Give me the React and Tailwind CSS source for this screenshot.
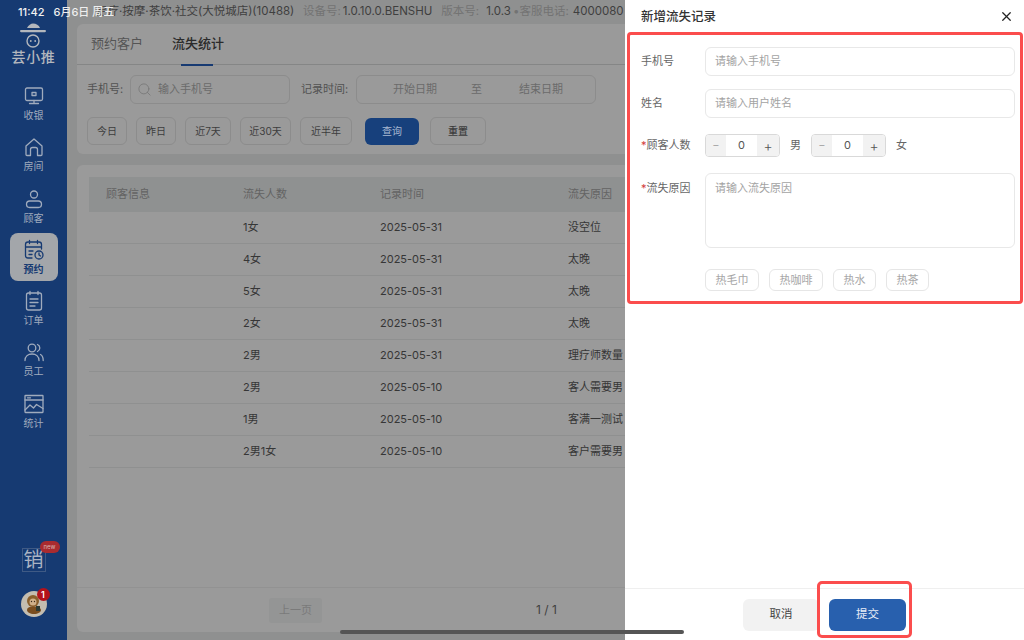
import React from "react";
import { Search, X } from "lucide-react";

const font = { fontFamily: '"Inter","Noto Sans CJK SC",sans-serif' };

const Ic = ({ children }) => (
  <svg width="24" height="24" viewBox="0 0 24 24" fill="none" stroke="currentColor" strokeWidth="1.3" strokeLinecap="round" strokeLinejoin="round">{children}</svg>
);

const nav = [
  ["收银", <Ic><rect x="3.5" y="4" width="17" height="12.5" rx="1.5" /><path d="M12 16.5v3M7.5 19.5h9M10 8.5h4v3h-4z" /></Ic>],
  ["房间", <Ic><path d="M4 11l8-7 8 7v8.5a1 1 0 0 1-1 1h-3.5v-6a2 2 0 0 0-2-2h-3a2 2 0 0 0-2 2v6H5a1 1 0 0 1-1-1z" /></Ic>],
  ["顾客", <Ic><circle cx="12" cy="7.5" r="3.5" /><rect x="4.5" y="14" width="15" height="6.5" rx="3.2" /></Ic>],
  ["预约", <Ic><path d="M10 20H6a2.5 2.5 0 0 1-2.500-2.500V6.500A2.500 2.500 0 0 1 6 4h11a2.500 2.500 0 0 1 2.500 2.500V11M3.500 9h16M7.500 2.500v3M15.500 2.500v3M7 13h4M7 16.500h3" /><circle cx="17" cy="17" r="4" /><path d="M17 15v2l1.500 1" /></Ic>],
  ["订单", <Ic><rect x="4.500" y="4" width="15" height="17" rx="2" /><path d="M8 2.500v3M16 2.500v3M8 10h8M8 13.500h8M8 17h5" /></Ic>],
  ["员工", <Ic><circle cx="10" cy="8" r="3.800" /><path d="M3 20.500c0-4 3-6.500 7-6.500s7 2.500 7 6.500M15.500 4.500a3.800 3.800 0 0 1 0 7M18.500 14.500c1.700 1 2.700 3 2.700 6" /></Ic>],
  ["统计", <Ic><rect x="3" y="3.500" width="18" height="17" rx="0.500" /><path d="M3 8h18M5.500 5.800h3M3 18l5-5 3.500 3 3-3.500 6.500 4" /></Ic>],
];

const rows = [
  ["1女", "2025-05-31", "没空位"],
  ["4女", "2025-05-31", "太晚"],
  ["5女", "2025-05-31", "太晚"],
  ["2女", "2025-05-31", "太晚"],
  ["2男", "2025-05-31", "理疗师数量"],
  ["2男", "2025-05-10", "客人需要男"],
  ["1男", "2025-05-10", "客满一测试"],
  ["2男1女", "2025-05-10", "客户需要男"],
];

function Stepper() {
  return (
    <div className="flex h-[23px] w-[75px] items-center overflow-hidden rounded-[4px] border border-[#d9d9d9] text-[11px]">
      <span className="flex h-full w-[20px] items-center justify-center bg-[#f2f2f2] text-[#aaaaaa]">−</span>
      <span className="flex-1 text-center text-[#555555]">0</span>
      <span className="flex h-full w-[22px] items-center justify-center bg-[#f2f2f2] text-[14px] font-light text-[#555555]">+</span>
    </div>
  );
}

export default function App() {
  return (
    <div style={font} className="relative flex h-[640px] w-[1024px] overflow-hidden bg-[#8f9090]">
      {/* sidebar */}
      <aside className="flex h-full w-[67px] shrink-0 flex-col items-center bg-[#163a72] text-[#a0abbd]">
        <div className="mt-[23px] flex flex-col items-center">
          <svg width="30" height="25" viewBox="0 0 30 25" className="text-[#b3b7bd]">
            <path d="M9 5c1.500-3 4-4.500 6-4.500 3 0 6 1.500 7 4.500z" fill="currentColor" />
            <rect x="2" y="7" width="26" height="2.200" rx="1.100" fill="currentColor" />
            <circle cx="15" cy="18" r="6" fill="none" stroke="currentColor" strokeWidth="1.400" />
            <circle cx="12.800" cy="18" r="0.900" fill="currentColor" />
            <circle cx="17.200" cy="18" r="0.900" fill="currentColor" />
          </svg>
          <span className="mt-[2px] whitespace-nowrap text-[14px] leading-[14px] font-medium tracking-[0.7px] text-[#b3b7bd]">芸小推</span>
        </div>
        <nav className="mt-[15px] flex flex-col items-center">
          {nav.map(([label, icon]) => {
            const active = label === "预约";
            return (
              <div key={label} className={active ? "mb-[3.3px] flex h-[48px] w-[48px] flex-col items-center justify-center rounded-[8px] bg-[#a3a6aa] text-[#163a72]" : "mb-[3.3px] flex h-[48px] w-[48px] flex-col items-center justify-center"}>
                {icon}
                <span className={active ? "mt-[1px] text-[10px] leading-[13px] font-semibold" : "mt-[1px] text-[10px] leading-[13px]"}>{label}</span>
              </div>
            );
          })}
        </nav>
        <div className="relative mt-auto mb-[19px] flex h-[24px] w-[24px] items-center justify-center border border-[#3f5a85] text-[20px] leading-none text-[#aab3c3]">
          销
          <span className="absolute -top-[8px] -right-[15px] flex h-[12px] w-[20px] items-center justify-center rounded-full bg-[#a92b2f] text-[6px] text-[#d9b5b5]">new</span>
        </div>
        <div className="relative mb-[23px] flex h-[26px] w-[26px] items-center justify-center rounded-full bg-[#c4bdb0]">
          <svg width="22" height="22" viewBox="0 0 22 22">
            <circle cx="10" cy="8" r="6" fill="#8a5f2c" />
            <circle cx="10" cy="9" r="3.500" fill="#d0b08a" />
            <circle cx="8.500" cy="8.500" r="0.700" fill="#3a2a18" />
            <circle cx="11.500" cy="8.500" r="0.700" fill="#3a2a18" />
            <path d="M4 17c0-2 2-3.500 6-3.500s8 1 8 3.500c0 2-3 4-7 4s-7-2-7-4z" fill="#7a4d1e" />
            <rect x="13" y="13" width="4" height="5" fill="#2e3a33" />
          </svg>
          <span className="absolute -top-[3px] -right-[3px] flex h-[13px] w-[13px] items-center justify-center rounded-full bg-[#b3121b] text-[9px] leading-none font-semibold text-white">1</span>
        </div>
      </aside>

      {/* main */}
      <main className="flex h-full min-w-0 flex-1 flex-col pl-[10px]">
        <div className="flex h-[24px] shrink-0 items-center whitespace-nowrap pl-[19px] text-[11.5px] text-[#3f3f3f]">
          <span className="w-[207px]">足疗·按摩·茶饮·社交(大悦城店)(10488)</span>
          <span className="text-[#737373]">设备号:</span>
          <span className="ml-[2px]">1.0.10.0.BENSHU</span>
          <span className="ml-[9px] text-[#737373]">版本号:</span>
          <span className="ml-[7px]">1.0.3</span>
          <span className="ml-[2px] text-[#737373]">•客服电话:</span>
          <span className="ml-[4px]">4000080</span>
        </div>
        <section className="h-[130px] w-[560px] shrink-0 rounded-l-[6px] bg-[#9a9a9a]">
          <div className="flex h-[41px] items-center gap-[29px] border-b border-[#858686] pl-[14px] text-[13px]">
            <span className="relative text-[#555555]">预约客户</span>
            <span className="relative font-medium text-[#2b2b2b]">
              流失统计
              <span className="absolute -bottom-[12px] left-[9px] h-[2px] w-[32px] bg-[#173a72]" />
            </span>
          </div>
          <div className="mt-[10px] flex items-center pl-[10px] text-[11px] text-[#525252]">
            <span className="w-[43px]">手机号:</span>
            <div className="flex h-[29px] w-[160px] items-center rounded-[6px] border border-[#8c8c8c] pl-[6px] text-[#6b6b6b]">
              <Search size={15} strokeWidth={1.25} className="text-[#747474]" />
              <span className="ml-[6px]">输入手机号</span>
            </div>
            <span className="ml-[11px] w-[55px]">记录时间:</span>
            <div className="flex h-[29px] w-[240px] items-center rounded-[6px] border border-[#8c8c8c] text-[#6b6b6b]">
              <span className="ml-[36px]">开始日期</span>
              <span className="ml-[34px]">至</span>
              <span className="ml-[37px]">结束日期</span>
            </div>
          </div>
          <div className="mt-[13px] flex items-center gap-[9px] pl-[10px] text-[10px] text-[#3d3d3d]">
            {[["今日", "w-[40px]"], ["昨日", "w-[40px]"], ["近7天", "w-[46px]"], ["近30天", "w-[51px]"], ["近半年", "w-[52px]"]].map(([t, w]) => (
              <span key={t} className={`flex h-[28px] ${w} items-center justify-center rounded-[6px] border border-[#8c8c8c]`}>{t}</span>
            ))}
            <span className="ml-[4px] flex h-[27px] w-[54px] items-center justify-center rounded-[6px] bg-[#17407c] text-[#a9b8d1]">查询</span>
            <span className="ml-[2px] flex h-[28px] w-[56px] items-center justify-center rounded-[6px] border border-[#8c8c8c] font-medium">重置</span>
          </div>
        </section>
        <section className="mt-[11px] mb-[8px] flex min-h-0 w-[560px] flex-1 flex-col rounded-l-[6px] bg-[#9a9a9a] pt-[12px] pl-[12px]">
          <div className="flex h-[35px] shrink-0 items-center bg-[#8f9191] text-[11px] text-[#636363]">
            <span className="w-[154px] pl-[17px]">顾客信息</span>
            <span className="w-[137px]">流失人数</span>
            <span className="w-[188px]">记录时间</span>
            <span>流失原因</span>
          </div>
          {rows.map(([a, b, c], i) => (
            <div key={i} className="flex h-[32px] shrink-0 items-center border-b border-[#8f9090] text-[11px] text-[#363636]">
              <span className="w-[154px]" />
              <span className="w-[137px]">{a}</span>
              <span className="w-[188px]">{b}</span>
              <span className="whitespace-nowrap">{c}</span>
            </div>
          ))}
          <div className="-ml-[12px] mt-auto flex h-[45px] shrink-0 items-center border-t border-[#929292] text-[11px]">
            <span className="ml-[192px] flex h-[25px] w-[53px] items-center justify-center rounded-[3px] bg-[#949595] text-[#7a7a7a]">上一页</span>
            <span className="ml-[214px] text-[12px] text-[#3f3f3f]">1 / 1</span>
          </div>
        </section>
      </main>

      {/* drawer */}
      <div className="absolute top-0 right-0 flex h-full w-[399px] flex-col bg-white">
        <div className="flex h-[32px] shrink-0 items-center justify-between pt-[2px] pr-[10px] pl-[16px]">
          <span className="text-[12.5px] font-medium text-[#333333]">新增流失记录</span>
          <X size={15} strokeWidth={2} className="-mt-[2px] text-[#222222]" />
        </div>
        <div className="mr-[1px] ml-[2px] flex h-[272px] shrink-0 flex-col rounded-[4px] border-[3px] border-[#fb4d4d] pt-[12px] pr-[5px] pl-[11px] text-[11px] text-[#666666]">
          <div className="flex h-[29px] items-center">
            <span className="w-[64px]">手机号</span>
            <div className="flex h-full flex-1 items-center rounded-[6px] border border-[#e8e8e8] pl-[9px] text-[#a3a3a3]">请输入手机号</div>
          </div>
          <div className="mt-[13px] flex h-[29px] items-center">
            <span className="w-[64px]">姓名</span>
            <div className="flex h-full flex-1 items-center rounded-[6px] border border-[#e8e8e8] pl-[9px] text-[#a3a3a3]">请输入用户姓名</div>
          </div>
          <div className="mt-[16px] flex h-[23px] items-center">
            <span className="w-[64px]"><span className="text-[#d23b3b]">*</span>顾客人数</span>
            <Stepper />
            <span className="mx-[10px]">男</span>
            <Stepper />
            <span className="ml-[10px]">女</span>
          </div>
          <div className="mt-[16px] flex h-[75px] items-start">
            <span className="mt-[7px] w-[64px]"><span className="text-[#d23b3b]">*</span>流失原因</span>
            <div className="h-full flex-1 rounded-[6px] border border-[#e8e8e8] pt-[6px] pl-[9px] text-[#a3a3a3]">请输入流失原因</div>
          </div>
          <div className="mt-[21px] ml-[64px] flex gap-[10px] text-[#a6a6a6]">
            {[["热毛巾", "w-[54px]"], ["热咖啡", "w-[54px]"], ["热水", "w-[43px]"], ["热茶", "w-[43px]"]].map(([t, w]) => (
              <span key={t} className={`flex h-[22px] ${w} items-center justify-center rounded-[6px] border border-[#e6e6e6]`}>{t}</span>
            ))}
          </div>
        </div>
        <div className="mt-auto flex h-[52px] shrink-0 items-start justify-center gap-[10px] border-t border-[#efefef] pt-[10px] text-[11.5px]">
          <span className="flex h-[32px] w-[76px] items-center justify-center rounded-[6px] bg-[#f2f2f2] text-[#444444]">取消</span>
          <span className="relative flex h-[32px] w-[77px] items-center justify-center rounded-[6px] bg-[#2860ae] text-[#e8eef7]">
            提交
            <span className="absolute -top-[18px] -right-[6px] -bottom-[7px] -left-[12px] rounded-[5px] border-[3px] border-[#fb4d4d]" />
          </span>
        </div>
      </div>

      {/* home indicator */}
      <div className="absolute top-[630px] left-[340px] h-[4px] w-[344px] rounded-full bg-[#555555]" />

      {/* status bar clock */}
      <div className="absolute top-[4px] left-[18px] flex gap-[9px] whitespace-nowrap text-[11px] font-medium text-[#f2f2f2]">
        <span>11:42</span>
        <span className="text-[#eeeeee]">6月6日 周五</span>
      </div>
    </div>
  );
}
